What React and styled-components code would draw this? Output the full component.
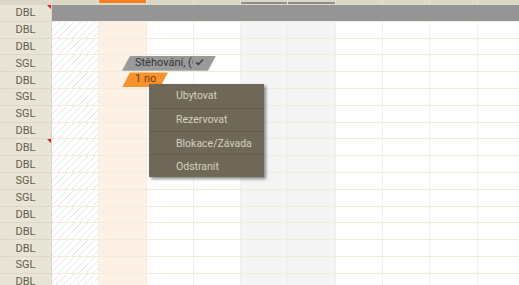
import React from 'react';
import styled, {createGlobalStyle, css} from 'styled-components';

const GlobalStyle = createGlobalStyle`
  html, body {
    margin: 0;
    padding: 0;
    background: #ffffff;
  }
  body {
    font-family: Roboto, "Liberation Sans", sans-serif;
  }
`

const ROW_H = 16.8
const DAY_W = 47.3

const Page = styled.div`
  position: relative;
  width: 519px;
  height: 285px;
  overflow: hidden;
  background: #ffffff;
`

const HeaderRow = styled.div`
  display: flex;
  height: 5px;
  background: #dcd8c8;
  overflow: hidden;
`

const HeaderLabel = styled.div`
  flex: 0 0 52px;
  display: flex;
  justify-content: center;
  align-items: flex-end;
  font-size: 11px;
  color: #625c48;
  line-height: 12px;
  padding-bottom: 5px;
  box-sizing: border-box;
  border-right: 1px solid #e6e2d3;
`

const HeaderDay = styled.div`
  flex: 0 0 ${DAY_W}px;
  box-sizing: border-box;
  border-right: 1px solid #e6e2d3;
  display: flex;
  align-items: flex-start;
  padding-top: ${p => p.$mark === 'today' ? 0 : 1.5}px;
  &::after {
    content: '';
    flex: 1;
    height: ${p => p.$mark === 'today' ? 3 : 2.5}px;
    background: ${p => p.$mark === 'today' ? '#f5801f' : p.$mark === 'weekend' ? '#8e8e8e' : 'transparent'};
  }
`

const Row = styled.div`
  display: flex;
  height: ${ROW_H}px;
`

const Label = styled.div`
  position: relative;
  flex: 0 0 52px;
  box-sizing: border-box;
  background: #e9e5d6;
  border-bottom: 1px solid #ddd8c6;
  border-right: 1px solid #ddd8c6;
  display: flex;
  align-items: center;
  justify-content: center;
  font-size: 11px;
  color: #625c48;
  ${p => p.$flag && css`
    &::after {
      content: '';
      position: absolute;
      top: 0;
      right: 0;
      border-top: 4px solid #e8161b;
      border-left: 4px solid transparent;
    }
  `}
`

const dayBackground = {
  past: css`
    background-color: #ffffff;
    background-image: repeating-linear-gradient(135deg, #e4e4e4 0 1px, transparent 1px 5px);
  `,
  today: css`background: #fdf0e4;`,
  weekend: css`background: #f4f4f4;`,
  normal: css`background: #ffffff;`,
}

const Day = styled.div`
  position: relative;
  flex: 0 0 ${DAY_W}px;
  box-sizing: border-box;
  border-bottom: 1.5px solid #f0ecdd;
  border-right: 1.5px solid #f3f0e3;
  ${p => dayBackground[p.$kind]}
`

const BlockedBar = styled.div`
  flex: 1;
  background: #959595;
  border-bottom: 1px solid #f3f0e3;
  margin-top: -0.5px;
`

const Booking = styled.div`
  position: absolute;
  z-index: 2;
  left: 22.7px;
  top: 0.3px;
  height: 15px;
  width: ${p => p.$w}px;
  box-sizing: border-box;
  padding: 0 12px 2px 13px;
  display: flex;
  align-items: center;
  gap: 2px;
  clip-path: polygon(8px 0, 100% 0, calc(100% - 8px) 100%, 0 100%);
  background: ${p => p.$color};
  color: ${p => p.$text};
  font-size: 11px;
  white-space: nowrap;
`

const BookingText = styled.span`
  flex: 1;
  overflow: hidden;
`

const Menu = styled.ul`
  position: absolute;
  z-index: 5;
  left: 148.5px;
  top: 84.3px;
  width: 115px;
  margin: 0;
  padding: 0;
  list-style: none;
  background: #6f6858;
  box-shadow: 2px 2px 3px rgba(0, 0, 0, 0.45);
`

const MenuItem = styled.li`
  height: 23.3px;
  box-sizing: border-box;
  padding-left: 27.5px;
  display: flex;
  align-items: center;
  font-size: 10.5px;
  color: #d8d1bf;
  & + & {
    border-top: 1px solid #645d4e;
  }
`

const kinds = ['past', 'today', 'normal', 'normal', 'weekend', 'weekend', 'normal', 'normal', 'normal', 'normal', 'normal']
const headerMarks = ['none', 'today', 'none', 'none', 'weekend', 'weekend', 'none', 'none', 'none', 'none', 'none']
const rooms = ['DBL', 'DBL', 'DBL', 'SGL', 'DBL', 'SGL', 'SGL', 'DBL', 'DBL', 'DBL', 'SGL', 'SGL', 'DBL', 'DBL', 'DBL', 'SGL', 'DBL']
const flagged = [0, 8]

const Check = () => (
    <svg width="9" height="8" viewBox="0 0 9 8">
        <path d="M1 4.2 L3.4 6.4 L8 1.4" fill="none" stroke="#3a3a3a" strokeWidth="1.4"/>
    </svg>
)

export default function App() {
    return (
        <Page>
            <GlobalStyle/>
            <HeaderRow>
                <HeaderLabel>Typ</HeaderLabel>
                {headerMarks.map((m, i) => <HeaderDay key={i} $mark={m}/>)}
            </HeaderRow>
            {rooms.map((room, r) => (
                <Row key={r}>
                    <Label $flag={flagged.includes(r)}>{room}</Label>
                    {r === 0 ? <BlockedBar/> : kinds.map((k, d) => (
                        <Day key={d} $kind={k}>
                            {r === 3 && d === 1 && (
                                <Booking $w={94} $color="#9a9a9a" $text="#333333">
                                    <BookingText>Stěhování, (Ondřej Novák)</BookingText>
                                    <Check/>
                                </Booking>
                            )}
                            {r === 4 && d === 1 && (
                                <Booking $w={46} $color="#f7922e" $text="#7a3d08">
                                    <BookingText>1 noc</BookingText>
                                </Booking>
                            )}
                        </Day>
                    ))}
                </Row>
            ))}
            <Menu>
                <MenuItem>Ubytovat</MenuItem>
                <MenuItem>Rezervovat</MenuItem>
                <MenuItem>Blokace/Závada</MenuItem>
                <MenuItem>Odstranit</MenuItem>
            </Menu>
        </Page>
    )
}
